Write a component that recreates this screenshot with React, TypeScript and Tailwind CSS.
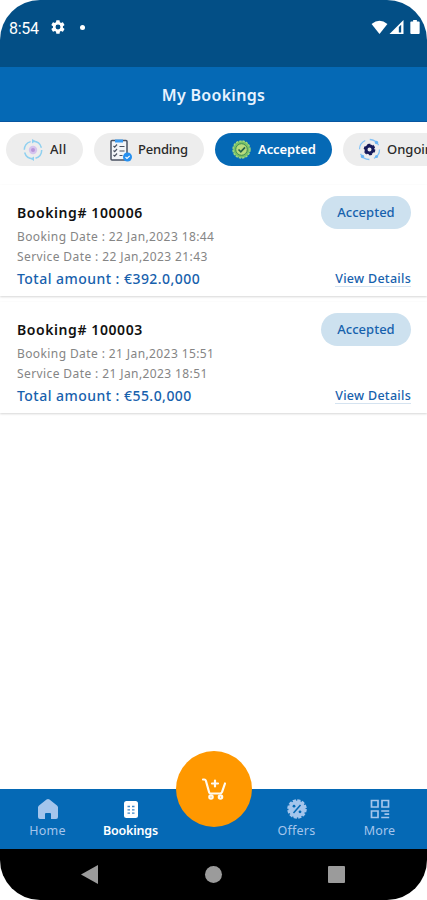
import type { ReactNode } from 'react'

type Booking = {
  id: string
  bookingDate: string
  serviceDate: string
  total: string
}

const bookings: Booking[] = [
  {
    id: '100006',
    bookingDate: '22 Jan,2023 18:44',
    serviceDate: '22 Jan,2023 21:43',
    total: '€392.0,000',
  },
  {
    id: '100003',
    bookingDate: '21 Jan,2023 15:51',
    serviceDate: '21 Jan,2023 18:51',
    total: '€55.0,000',
  },
]

const GearIcon = ({ className }: { className?: string }) => (
  <svg viewBox="0 0 24 24" fill="currentColor" className={className}>
    <path d="M19.4 13a7.8 7.8 0 0 0 0-2l2.1-1.6c.2-.2.3-.5.1-.7l-2-3.4c-.1-.3-.4-.3-.6-.3l-2.5 1a7.3 7.3 0 0 0-1.7-1L14.4 2.4a.5.5 0 0 0-.5-.4h-4a.5.5 0 0 0-.5.4L9 5a7.7 7.7 0 0 0-1.7 1l-2.5-1c-.2-.1-.5 0-.6.3l-2 3.4c-.1.2-.1.5.1.7L4.5 11a7.9 7.9 0 0 0 0 2l-2.2 1.6c-.2.2-.2.5-.1.7l2 3.4c.1.3.4.3.6.3l2.5-1a7.3 7.3 0 0 0 1.7 1l.4 2.6c0 .3.2.4.5.4h4c.3 0 .5-.2.5-.4l.4-2.6a7.7 7.7 0 0 0 1.7-1l2.5 1c.2.1.5 0 .6-.3l2-3.4c.1-.2.1-.5-.1-.7zM12 8.300a3.700 3.700 0 1 1 0 7.400 3.700 3.700 0 0 1 0-7.400z" />
  </svg>
)

const StatusBar = () => (
  <div className="flex h-[67px] items-start bg-[#034f86] pl-[9px] pr-[7px] pt-[18px] text-white">
    <span className="w-[31px] font-[Roboto] text-[16px] leading-[21px] tracking-[-0.3px]">
      8:54
    </span>
    <GearIcon className="ml-[10px] mt-[1px] h-4 w-4" />
    <span className="ml-[14px] mt-[7px] h-[5px] w-[5px] rounded-full bg-white" />
    <div className="ml-auto mt-[2px] flex">
      <svg width="17" height="14" viewBox="0 0 17 15" fill="currentColor">
        <path d="M0 4.2Q8.5-2.6 17 4.2L8.500 15z" />
      </svg>
      <svg width="15" height="14" viewBox="0 0 15 15" className="ml-px">
        <path d="M0 15 15 0V15z" fill="white" />
        <path d="M10 7.5V13.5H12.5V5z" fill="#034f86" />
      </svg>
      <svg
        width="10"
        height="14"
        viewBox="0 0 10 15"
        fill="currentColor"
        className="ml-[6px]"
      >
        <path d="M3 0h4v1.5h2q1 0 1 1V14q0 1-1 1H1q-1 0-1-1V2.5q0-1 1-1h2z" />
      </svg>
    </div>
  </div>
)

const AllIcon = () => (
  <svg width="20" height="22" viewBox="0 0 20 22" fill="none">
    <circle cx="10" cy="11" r="8.7" stroke="#8fd0f0" strokeWidth="1.5" strokeDasharray="11 2.660" />
    <circle cx="10" cy="11" r="4.2" fill="#d5c4ee" />
    <circle cx="10" cy="11" r="2" fill="#b796d8" />
    <path d="m9 0 3.5 2L9 4.5zM11 22l-3.5-2.2L11 17.5z" fill="#8fd0f0" />
  </svg>
)

const PendingIcon = () => (
  <svg width="22" height="24" viewBox="0 0 22 24" fill="none">
    <rect x="1" y="2.5" width="16" height="19.5" rx="1" fill="#f2f5f8" stroke="#4a5262" strokeWidth="1.5" />
    <path d="M5 1.5h8v3H5z" fill="#3b9cf2" />
    <path
      d="m3.5 8 1.200 1.200L7 6.500m-3.500 6 1.200 1.200L7 11m-3.500 6 1.200 1.200L7 15.500M9.500 8.500h5m-5 4.500h5m-5 4.500h3"
      stroke="#4a5262"
      strokeWidth="1.2"
    />
    <circle cx="17.5" cy="19" r="4.5" fill="#2690f0" />
    <path d="m15.5 19 1.5 1.5 2.7-2.7" stroke="white" strokeWidth="1.1" />
  </svg>
)

const AcceptedIcon = () => (
  <svg width="19" height="19" viewBox="0 0 19 19" fill="none">
    <circle cx="9.5" cy="9.5" r="8.5" fill="#79c267" stroke="#a3d97b" strokeWidth="1.4" strokeDasharray="2.4 1" />
    <circle cx="9.5" cy="9.5" r="5.8" fill="#b9dc7c" stroke="#3f8a55" />
    <path d="m6.5 9.5 2.3 2.3 4.2-4.5" stroke="#28634c" strokeWidth="1.7" />
  </svg>
)

const OngoingIcon = () => (
  <svg width="23" height="23" viewBox="0 0 23 23" fill="none">
    <circle cx="11.5" cy="11.5" r="10" stroke="#83c2f6" strokeWidth="1.3" strokeDasharray="11 4.7" />
    <circle cx="18.5" cy="4.5" r="1.7" fill="#69b5f5" />
    <circle cx="4.5" cy="18.5" r="1.7" fill="#69b5f5" />
    <circle cx="18.5" cy="18.5" r="1.5" fill="#69b5f5" />
    <circle cx="11.5" cy="11.5" r="3.5" stroke="#171c5c" strokeWidth="3" />
    <circle cx="11.5" cy="11.5" r="5.2" stroke="#171c5c" strokeWidth="1.3" strokeDasharray="3 2.445" />
  </svg>
)

const Header = () => (
  <div className="flex h-[55px] items-center justify-center border-b border-[#0756a0] bg-[#0569b5] pt-[2px]">
    <h1 className="text-[16px] font-semibold leading-none tracking-[0.3px] text-[#e8f3ff]">
      My Bookings
    </h1>
  </div>
)

const Filters = () => (
  <div className="flex h-[63px] overflow-hidden pl-[6px] pt-[11px] text-[13px] font-medium text-[#292929]">
    <div className="flex h-[33px] w-[77px] shrink-0 items-center rounded-full bg-[#ededed] pl-[17px]">
      <AllIcon />
      <span className="ml-[7px] tracking-[0.3px]">All</span>
    </div>
    <div className="ml-[11px] flex h-[33px] w-[110px] shrink-0 items-center rounded-full bg-[#ededed] pl-4">
      <PendingIcon />
      <span className="ml-[6px] tracking-[-0.2px]">Pending</span>
    </div>
    <div className="ml-[11px] flex h-[33px] w-[117px] shrink-0 items-center rounded-full bg-[#0569b5] pl-[17px] font-semibold text-white">
      <AcceptedIcon />
      <span className="ml-[7px] tracking-[-0.1px]">Accepted</span>
    </div>
    <div className="ml-[11px] flex h-[33px] w-[114px] shrink-0 items-center rounded-full bg-[#ededed] pl-[15px]">
      <OngoingIcon />
      <span className="ml-[6px]">Ongoing</span>
    </div>
  </div>
)

const BookingCard = ({ booking }: { booking: Booking }) => (
  <div className="mb-[6px] flex h-[111px] justify-between pl-[17px] pr-4 pt-[11px] shadow-[0_1px_2px_rgba(0,0,0,0.16)]">
    <div className="whitespace-nowrap">
      <h2 className="h-[30px] text-[14px] font-semibold leading-[33px] tracking-[0.58px] text-[#111]">
        Booking# {booking.id}
      </h2>
      <p className="h-[20px] text-[12px] leading-[22px] tracking-[0.4px] text-[#858585]">
        Booking Date : {booking.bookingDate}
      </p>
      <p className="h-[21px] text-[12px] leading-[22px] tracking-[0.4px] text-[#858585]">
        Service Date : {booking.serviceDate}
      </p>
      <p className="text-[14px] font-medium leading-[24px] tracking-[0.46px] text-[#1761ad]">
        Total amount : {booking.total}
      </p>
    </div>
    <div className="flex flex-col items-end">
      <span className="flex h-[33px] w-[90px] items-center justify-center rounded-full bg-[#cde1ef] text-[13px] font-medium text-[#1761ad]">
        Accepted
      </span>
      <span className="mt-[42px] border-b border-[#d5e3f0] text-[12.5px] font-medium leading-[15px] tracking-[0.28px] text-[#1761ad]">
        View Details
      </span>
    </div>
  </div>
)

const NavItem = ({
  label,
  active,
  children,
}: {
  label: string
  active?: boolean
  children: ReactNode
}) => (
  <div
    className={
      active
        ? 'flex w-[83px] flex-col items-center font-semibold tracking-[-0.2px] text-white'
        : 'flex w-[83px] flex-col items-center tracking-[0.2px] text-[#a4c5ec]'
    }
  >
    <div className="flex h-[22px] items-center">{children}</div>
    <span className="mt-[2px] text-[12.5px] leading-[17px]">{label}</span>
  </div>
)

const BottomNav = () => (
  <div className="relative flex h-[60px] bg-[#0569b5] pl-[6px] pt-[9px]">
    <NavItem label="Home">
      <svg width="20" height="20" viewBox="0 0 20 20" fill="currentColor">
        <path d="M8.5.6Q10-.5 11.5.6L19 6.5q1 1 1 2V18q0 2-2 2h-5v-5q0-1-1-1H8q-1 0-1 1v5H2q-2 0-2-2V8.5q0-1 1-2z" />
      </svg>
    </NavItem>
    <NavItem label="Bookings" active>
      <svg width="14" height="17" viewBox="0 0 14 17" fill="none">
        <rect width="14" height="17" rx="2.5" fill="currentColor" />
        <path
          d="M3.5 5.500h2.500m2 0h2.500M3.500 8.800h2.500m2 0h2.500M3.500 12.200h2.500m2 0h2.500"
          stroke="#3c86c8"
          strokeWidth="1.3"
        />
      </svg>
    </NavItem>
    <div className="w-[83px]" />
    <NavItem label="Offers">
      <svg width="20" height="20" viewBox="0 0 20 20" fill="none">
        <circle cx="10" cy="10" r="8.6" stroke="currentColor" strokeWidth="2.4" strokeDasharray="3.2 1.303" />
        <circle cx="10" cy="10" r="8.6" fill="currentColor" />
        <path d="m6.5 14 7-8" stroke="#0569b5" strokeWidth="1.500" />
        <circle cx="7" cy="7.2" r="1.4" fill="#0569b5" />
        <circle cx="13" cy="12.8" r="1.4" fill="#0569b5" />
      </svg>
    </NavItem>
    <NavItem label="More">
      <svg
        width="20"
        height="20"
        viewBox="0 0 20 20"
        fill="none"
        stroke="currentColor"
        strokeWidth="1.7"
      >
        <path d="M1.500 1.500h6.500v6.500h-6.500zM12 1.500h6.500v6.500h-6.500zM1.500 12h6.500v6.500h-6.500zM11.200 12h8M14.500 15.200h4.700M11.200 18.500h8" />
      </svg>
    </NavItem>
    <div className="absolute left-[176px] top-[-38px] flex h-[76px] w-[76px] items-center justify-center rounded-full bg-[#ff9800]">
      <svg
        width="26"
        height="24"
        viewBox="0 0 26 24"
        fill="none"
        stroke="#fffaf0"
        strokeWidth="2.2"
        strokeLinecap="round"
        strokeLinejoin="round"
      >
        <path d="M2 2.500h1.200q1.300 0 1.700 1.300L8.200 15.500q.3 1 1.300 1h9.500q1.500 0 2-1.300L24 6.500M14 3.500v6M11 6.500h6" />
        <circle cx="10" cy="20" r="1.700" />
        <circle cx="19.500" cy="20" r="1.700" />
      </svg>
    </div>
  </div>
)

const SystemNav = () => (
  <div className="flex h-[51px] items-center justify-between bg-black pl-[81px] pr-[82px] text-[#9b9b9b]">
    <svg width="17" height="19" viewBox="0 0 17 19" fill="currentColor">
      <path d="M17 0v19L0 9.5z" />
    </svg>
    <div className="h-[17px] w-[17px] rounded-full bg-[#9b9b9b]" />
    <div className="h-[17px] w-[17px] rounded-[1px] bg-[#9b9b9b]" />
  </div>
)

export default function App() {
  return (
    <div className="h-[900px] w-[427px] bg-white">
      <div className="flex h-full flex-col overflow-hidden rounded-[40px] bg-white font-['Noto_Sans',sans-serif]">
        <StatusBar />
        <Header />
        <Filters />
        <div className="flex-1">
          {bookings.map((booking) => (
            <BookingCard key={booking.id} booking={booking} />
          ))}
        </div>
        <BottomNav />
        <SystemNav />
      </div>
    </div>
  )
}
